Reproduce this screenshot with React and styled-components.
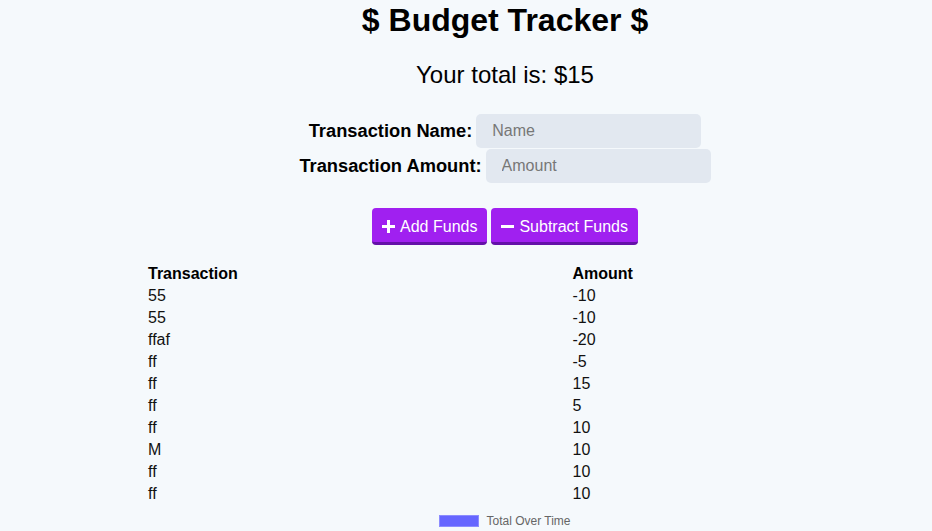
import React from 'react';
import styled, { createGlobalStyle } from 'styled-components';

const GlobalStyle = createGlobalStyle`
  body {
    margin: 0;
    background: #f5f9fc;
    font-family: "Liberation Sans", Arial, sans-serif;
    color: #000;
  }
`;

const Page = styled.div`
  display: flex;
  flex-direction: column;
  align-items: center;
`;

const Header = styled.div`
  display: flex;
  flex-direction: column;
  align-items: center;
  padding-left: 78px;
`;

const Title = styled.h1`
  margin: 0;
  font-size: 32px;
  line-height: 40px;
  font-weight: bold;
`;

const Total = styled.div`
  margin-top: 22px;
  font-size: 24px;
  line-height: 26px;
`;

const Form = styled.div`
  margin-top: 26px;
  display: flex;
  flex-direction: column;
  align-items: center;
  gap: 1px;
`;

const Row = styled.div`
  display: flex;
  align-items: center;
  gap: 4px;
`;

const Label = styled.label`
  font-weight: bold;
  font-size: 18.3px;
`;

const Input = styled.input`
  width: 225px;
  height: 34px;
  box-sizing: border-box;
  border: none;
  border-radius: 5px;
  background: #e2e8f0;
  padding: 0 16px;
  font-family: inherit;
  font-size: 16px;
  &::placeholder {
    color: #777;
  }
`;

const Buttons = styled.div`
  margin-top: 25px;
  display: flex;
  gap: 4px;
`;

const Button = styled.button`
  display: flex;
  align-items: center;
  gap: 5px;
  height: 37px;
  padding: 3px 10px 0;
  border: none;
  border-bottom: 3px solid #6411a8;
  border-radius: 4px;
  background: #a020f0;
  color: #fff;
  font-family: inherit;
  font-size: 16px;
`;

const Table = styled.table`
  margin-top: 17px;
  width: 640px;
  border-collapse: collapse;
  font-size: 16px;
  line-height: 22px;
`;

const Th = styled.th`
  text-align: left;
  padding: 1px 2px 0;
  line-height: 22px;
  width: ${(p) => p.w}px;
`;

const Td = styled.td`
  padding: 0 2px;
  color: #111;
`;

const Legend = styled.div`
  margin-top: 9px;
  display: flex;
  align-items: center;
  gap: 7px;
  font-size: 12px;
  color: #666;
  margin-left: 78px;
`;

const Swatch = styled.span`
  width: 40px;
  height: 12px;
  box-sizing: border-box;
  background: #6666ff;
  border: 1px solid #8c8cff;
`;

const Plus = () => (
  <svg width="13" height="13" viewBox="0 0 13 13">
    <path d="M5 0h3v5h5v3H8v5H5V8H0V5h5z" fill="#fff" />
  </svg>
);

const Minus = () => (
  <svg width="13" height="13" viewBox="0 0 13 13">
    <rect x="0" y="5" width="13" height="3" fill="#fff" />
  </svg>
);

const rows = [
  ['55', '-10'],
  ['55', '-10'],
  ['ffaf', '-20'],
  ['ff', '-5'],
  ['ff', '15'],
  ['ff', '5'],
  ['ff', '10'],
  ['M', '10'],
  ['ff', '10'],
  ['ff', '10'],
];

const App = () => (
  <Page>
    <GlobalStyle />
    <Header>
      <Title>$ Budget Tracker $</Title>
      <Total>Your total is: $15</Total>
      <Form>
        <Row>
          <Label>Transaction Name:</Label>
          <Input placeholder="Name" />
        </Row>
        <Row>
          <Label>Transaction Amount:</Label>
          <Input placeholder="Amount" />
        </Row>
      </Form>
      <Buttons>
        <Button><Plus />Add Funds</Button>
        <Button><Minus />Subtract Funds</Button>
      </Buttons>
    </Header>
    <Table>
      <thead>
        <tr>
          <Th w={426}>Transaction</Th>
          <Th w={214}>Amount</Th>
        </tr>
      </thead>
      <tbody>
        {rows.map(([name, amount], i) => (
          <tr key={i}>
            <Td>{name}</Td>
            <Td>{amount}</Td>
          </tr>
        ))}
      </tbody>
    </Table>
    <Legend>
      <Swatch />
      Total Over Time
    </Legend>
  </Page>
);

export default App;
